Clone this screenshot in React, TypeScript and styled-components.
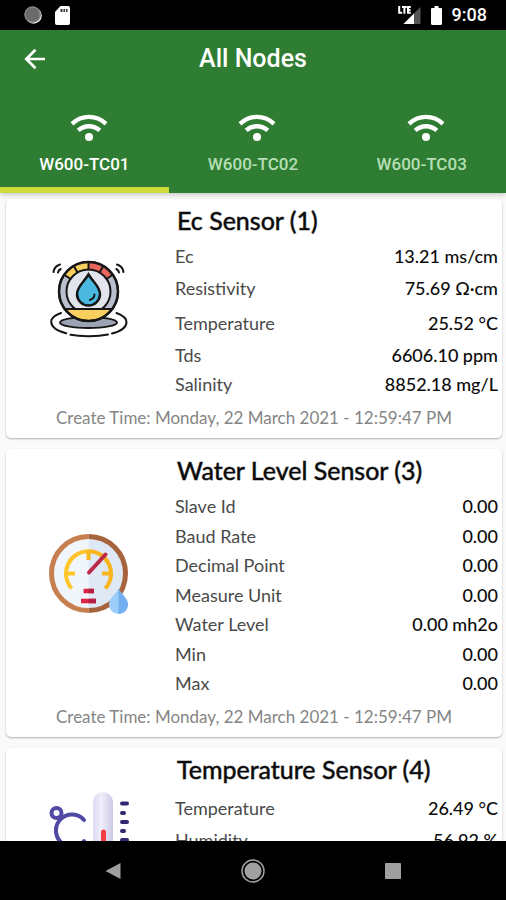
import React, { useState } from "react";
import styled, { createGlobalStyle } from "styled-components";

const GlobalStyle = createGlobalStyle`
  *, *::before, *::after { box-sizing: border-box; }
  body { margin: 0; background: #000; }
  button { border: 0; padding: 0; background: none; color: inherit; font: inherit; cursor: pointer; }
  svg { display: block; }
`;

const Screen = styled.div`
  display: flex;
  flex-direction: column;
  height: 100vh;
  background: #fafafa;
  font-family: Lato, "Liberation Sans", sans-serif;
  color: #0c0c0c;
`;

const StatusBar = styled.div`
  flex: none;
  display: flex;
  align-items: center;
  justify-content: space-between;
  height: 30px;
  padding: 0 19px 0 24px;
  background: #000;
  color: #fff;
  font: 500 18px/30px Roboto, sans-serif;
`;

const StatusGroup = styled.div<{ $gap: number }>`
  display: flex;
  align-items: center;
  gap: ${(p) => p.$gap}px;
`;

const Header = styled.header`
  flex: none;
  position: relative;
  z-index: 1;
  background: #2f7d32;
  color: #fff;
  font-family: Roboto, sans-serif;
  box-shadow: 0 2px 5px rgba(0, 0, 0, 0.2);
`;

const AppBar = styled.div`
  display: grid;
  grid-template-columns: 70px 1fr 70px;
  align-items: center;
  height: 58px;
`;

const BackButton = styled.button`
  display: grid;
  place-items: center;
  height: 58px;
`;

const PageTitle = styled.h1`
  margin: 0;
  text-align: center;
  font-size: 25px;
  line-height: 32px;
  font-weight: 500;
`;

const Tabs = styled.div`
  display: grid;
  grid-template-columns: repeat(3, 1fr);
`;

const Tab = styled.button<{ $active: boolean }>`
  display: flex;
  flex-direction: column;
  align-items: center;
  height: 105px;
  padding-top: 26px;
  border-bottom: 6px solid ${(p) => (p.$active ? "#cddc39" : "transparent")};
  color: ${(p) => (p.$active ? "#fff" : "#b5dfb5")};
  font-size: 17px;
  line-height: 24px;
  font-weight: 500;
`;

const TabIcon = styled.span`
  margin: 0 0 10px 9px;
  color: #fff;
`;

const NodeList = styled.main`
  flex: 1;
  min-height: 0;
  overflow: hidden;
  display: flex;
  flex-direction: column;
  gap: 11px;
  padding: 6px 4px 0 6px;
`;

const Card = styled.article`
  flex: none;
  background: #fff;
  border-radius: 5px;
  box-shadow: 0 1px 2px rgba(0, 0, 0, 0.3);
`;

const CardBody = styled.div`
  display: grid;
  grid-template-columns: 165px 1fr;
  min-height: 168px;
  padding-right: 4px;
`;

const Picture = styled.div`
  display: flex;
  align-items: center;
  justify-content: center;
`;

const CardTitle = styled.h2`
  margin: 0;
  padding: 5px 0 5px 6px;
  font-size: 25px;
  line-height: 32px;
  font-weight: 400;
  -webkit-text-stroke: 1px rgba(0, 0, 0, 0.5);
`;

const Readings = styled.dl`
  margin: 0;
  padding-left: 4px;
`;

const rowHeights = { normal: 30, ohm: 34, celsius: 35 };

const Reading = styled.div<{ $size: keyof typeof rowHeights }>`
  display: flex;
  align-items: center;
  justify-content: space-between;
  height: ${(p) => rowHeights[p.$size]}px;
  font-size: 18px;
  line-height: 24px;

  &:nth-child(even) {
    height: ${(p) => (p.$size === "normal" ? 29 : rowHeights[p.$size])}px;
  }
`;

const Label = styled.dt`
  font-weight: 400;
  color: #4a4a4a;
`;

const Value = styled.dd`
  margin: 0;
  font-weight: 500;
`;

const Created = styled.p`
  margin: 0;
  padding: 7px 0 8px;
  text-align: center;
  font-size: 17px;
  line-height: 24px;
  font-weight: 400;
  color: #858585;
`;

const NavBar = styled.nav`
  flex: none;
  display: grid;
  grid-template-columns: repeat(3, 140px);
  justify-content: center;
  height: 59px;
  background: #000;
`;

const NavButton = styled.button`
  display: grid;
  place-items: center;
`;

const WifiIcon = () => (
  <svg width="38" height="28" viewBox="0 0 38 28" fill="none" stroke="currentColor" strokeWidth="4.4">
    <path d="M2 9.8C12 .6 26 .6 36 9.8" />
    <path d="M8.2 16.4c6.300-5.600 15.300-5.600 21.600 0" />
    <circle cx="19" cy="23" r="4" fill="currentColor" stroke="none" />
  </svg>
);

const BackIcon = () => (
  <svg width="22" height="22" viewBox="0 0 22 22" fill="none" stroke="currentColor" strokeWidth="2.700">
    <path d="M21 11H3M11.500 1.800 2.300 11l9.200 9.200" />
  </svg>
);

const SyncIcon = () => (
  <svg width="18" height="18" viewBox="0 0 18 18">
    <circle cx="9.500" cy="9.500" r="8.300" fill="#e8e8e8" />
    <circle cx="8.500" cy="8.500" r="8.300" fill="#6a6a6a" />
    <circle cx="8.500" cy="8.500" r="7.400" fill="none" stroke="#8b8b8b" strokeWidth="1" />
  </svg>
);

const CardIcon = () => (
  <svg width="15" height="19" viewBox="0 0 15 19">
    <path d="M5.500 0H13a2 2 0 0 1 2 2v15a2 2 0 0 1-2 2H2a2 2 0 0 1-2-2V6z" fill="#fff" />
    <path d="M5.500 3h2v3h-2zM8.500 3h1.500v3H8.500zM11 3h1.500v3H11z" fill="#333" />
  </svg>
);

const SignalIcon = () => (
  <svg width="23" height="20" viewBox="0 0 23 20">
    <path d="M22.500 2v17H5.500z" fill="#555" />
    <path d="M16 8.500V19H5.500z" fill="#fff" />
    <path
      d="M1.200 1v6.800h3M4 2h4.800M6.400 2v6.700M12.800 2h-2.800v5.800h2.800M10 4.900h2.500"
      fill="none"
      stroke="#fff"
      strokeWidth="2"
    />
  </svg>
);

const BatteryIcon = () => (
  <svg width="11" height="19" viewBox="0 0 11 19" fill="#fff">
    <path d="M3.500 0h4v2H10a1 1 0 0 1 1 1v14.500a1.500 1.500 0 0 1-1.500 1.500h-8A1.500 1.500 0 0 1 0 17.500V3a1 1 0 0 1 1-1h2.500z" />
  </svg>
);

const EcPicture = () => (
  <svg width="78" height="80" viewBox="0 0 78 80" fill="none" stroke="#161616" strokeWidth="2" strokeLinecap="round">
    <ellipse cx="38.500" cy="63.500" rx="28.500" ry="5.500" fill="#9ca3b3" />
    <path d="M11 54C4 56.500 1 59.500 1.200 63c.3 5 6 9 15 11.300M20.500 75.800c11 2 27 1.800 37.500-.4M62 74.500c9-2.300 14.500-6.500 14.500-11.500 0-4-3.500-6.500-10-9" />
    <circle cx="38.500" cy="32.500" r="29.500" fill="#b9bfcc" />
    <path d="M14.300 15.700A29.500 29.500 0 0 1 38.500 3v7.500a22 22 0 0 0-18 9.500z" fill="#f9cf5e" stroke="none" />
    <path d="M38.500 3a29.500 29.500 0 0 1 24.200 12.700L56.500 20a22 22 0 0 0-18-9.500z" fill="#e8655c" stroke="none" />
    <circle cx="38.500" cy="32.500" r="22" fill="#e3e5ec" />
    <path d="M14.800 50a29.500 29.500 0 0 0 47.400 0z" fill="#f9cf5e" />
    <path d="M20.500 20l-6.200-4.300M27.500 13.500 23.800 7M38.500 10.500V3M49.500 13.500 53.200 7M56.500 20l6.200-4.300" />
    <circle cx="38.500" cy="32.500" r="29.500" strokeWidth="2.500" />
    <path d="M38.500 15.500C34 23 27 27.500 27 35a11.500 11.500 0 0 0 23 0C50 27.500 43 23 38.500 15.500z" fill="#49b9df" strokeWidth="2.500" />
    <path d="M44.500 35.500c-.2 3-1.700 4.500-4.500 5.500" />
    <path d="M3.500 13C4 9.500 6.500 6.500 10 5.500M8 13.500c.3-1.600 1.200-2.700 2.700-3.500M73.500 13C73 9.500 70.500 6.500 67 5.500M69 13.500c-.3-1.600-1.200-2.700-2.700-3.500" />
  </svg>
);

const GaugePicture = () => (
  <svg width="80" height="80" viewBox="0 0 80 80" fill="none">
    <circle cx="39.500" cy="39.500" r="36.500" fill="#f1f6fd" />
    <path d="M39.500 3a36.500 36.500 0 0 1 0 73z" fill="#dfe8f5" />
    <path d="M39.500 2.500a37 37 0 0 0 0 74" stroke="#c77f50" strokeWidth="5" />
    <path d="M39.500 2.500a37 37 0 0 1 0 74" stroke="#a7633c" strokeWidth="5" />
    <path d="M22.700 54.500A22.300 22.300 0 0 1 39.500 17.300M18 39.500h8" stroke="#ffc62b" strokeWidth="4" />
    <path d="M39.500 17.300A22.300 22.300 0 0 1 56.300 54.500M53 39.500h8" stroke="#f8b51e" strokeWidth="4" />
    <path d="M39.500 17v9" stroke="#f8b51e" strokeWidth="4" />
    <path d="m40 38.500 16.500-18" stroke="#bb2947" strokeWidth="4" strokeLinecap="round" />
    <path d="M34.500 57H45M32 67h15" stroke="#db2645" strokeWidth="4.500" />
    <path d="M39.500 57H45M39.500 67H47" stroke="#b71f42" strokeWidth="4.500" />
    <path d="M69.500 55c-4 6-9.500 10-9.500 15.500a9.500 9.500 0 0 0 19 0C79 65 73.500 61 69.500 55z" fill="#9bcdf8" />
    <path d="M69.500 55c4 6 9.500 10 9.500 15.500a9.500 9.500 0 0 1-9.500 9.500z" fill="#73aff0" />
  </svg>
);

const ThermometerPicture = () => (
  <svg width="80" height="80" viewBox="0 0 80 80" fill="none" stroke="#5149a5" strokeWidth="4" strokeLinecap="round">
    <defs>
      <linearGradient id="tube">
        <stop offset="0" stopColor="#d0cde9" />
        <stop offset=".45" stopColor="#efeefa" />
        <stop offset="1" stopColor="#bdb8df" />
      </linearGradient>
    </defs>
    <circle cx="7.500" cy="21" r="5" />
    <path d="M35 28A16 16 0 1 0 35 49" />
    <path d="M44 10a10 10 0 0 1 20 0v46a15 15 0 1 1-20 0z" fill="url(#tube)" stroke="none" />
    <path d="M54.500 40v26" stroke="#f33e43" strokeWidth="5" />
    <circle cx="54.500" cy="67" r="8" fill="#f33e43" stroke="none" />
    <path d="M73 11.500h5M73 21h2M73 30h5M73 39h2M73 48h5M73 57h2" stroke="#32276f" />
  </svg>
);

type Row = [label: string, value: string, size?: keyof typeof rowHeights];

const sensors: { title: string; picture: React.ReactNode; rows: Row[] }[] = [
  {
    title: "Ec Sensor (1)",
    picture: <EcPicture />,
    rows: [
      ["Ec", "13.21 ms/cm"],
      ["Resistivity", "75.69 Ω·cm", "ohm"],
      ["Temperature", "25.52 °C", "celsius"],
      ["Tds", "6606.10 ppm"],
      ["Salinity", "8852.18 mg/L"],
    ],
  },
  {
    title: "Water Level Sensor (3)",
    picture: <GaugePicture />,
    rows: [
      ["Slave Id", "0.00"],
      ["Baud Rate", "0.00"],
      ["Decimal Point", "0.00"],
      ["Measure Unit", "0.00"],
      ["Water Level", "0.00 mh2o"],
      ["Min", "0.00"],
      ["Max", "0.00"],
    ],
  },
  {
    title: "Temperature Sensor (4)",
    picture: <ThermometerPicture />,
    rows: [
      ["Temperature", "26.49 °C", "celsius"],
      ["Humidity", "56.92 %"],
    ],
  },
];

const nodes = ["W600-TC01", "W600-TC02", "W600-TC03"];

export default function App() {
  const [active, setActive] = useState(0);
  return (
    <Screen>
      <GlobalStyle />
      <StatusBar>
        <StatusGroup $gap={13}>
          <SyncIcon />
          <CardIcon />
        </StatusGroup>
        <StatusGroup $gap={10}>
          <SignalIcon />
          <BatteryIcon />
          <span>9:08</span>
        </StatusGroup>
      </StatusBar>
      <Header>
        <AppBar>
          <BackButton aria-label="Back">
            <BackIcon />
          </BackButton>
          <PageTitle>All Nodes</PageTitle>
        </AppBar>
        <Tabs role="tablist">
          {nodes.map((name, i) => (
            <Tab key={name} role="tab" aria-selected={i === active} $active={i === active} onClick={() => setActive(i)}>
              <TabIcon>
                <WifiIcon />
              </TabIcon>
              {name}
            </Tab>
          ))}
        </Tabs>
      </Header>
      <NodeList>
        {sensors.map((s) => (
          <Card key={s.title}>
            <CardBody>
              <Picture>{s.picture}</Picture>
              <div>
                <CardTitle>{s.title}</CardTitle>
                <Readings>
                  {s.rows.map(([label, value, size = "normal"]) => (
                    <Reading key={label} $size={size}>
                      <Label>{label}</Label>
                      <Value>{value}</Value>
                    </Reading>
                  ))}
                </Readings>
              </div>
            </CardBody>
            <Created>Create Time: Monday, 22 March 2021 - 12:59:47 PM</Created>
          </Card>
        ))}
      </NodeList>
      <NavBar aria-label="System">
        <NavButton aria-label="Back">
          <svg width="16" height="18" viewBox="0 0 16 18">
            <path d="M15.500 1v16L.5 9z" fill="#a0a0a0" />
          </svg>
        </NavButton>
        <NavButton aria-label="Home">
          <svg width="24" height="24" viewBox="0 0 24 24">
            <circle cx="12" cy="12" r="8.500" fill="#a0a0a0" />
            <circle cx="12" cy="12" r="11" fill="none" stroke="#a0a0a0" strokeWidth="1.500" />
          </svg>
        </NavButton>
        <NavButton aria-label="Recent apps">
          <svg width="16" height="16" viewBox="0 0 16 16">
            <rect width="16" height="16" rx="1" fill="#a0a0a0" />
          </svg>
        </NavButton>
      </NavBar>
    </Screen>
  );
}
